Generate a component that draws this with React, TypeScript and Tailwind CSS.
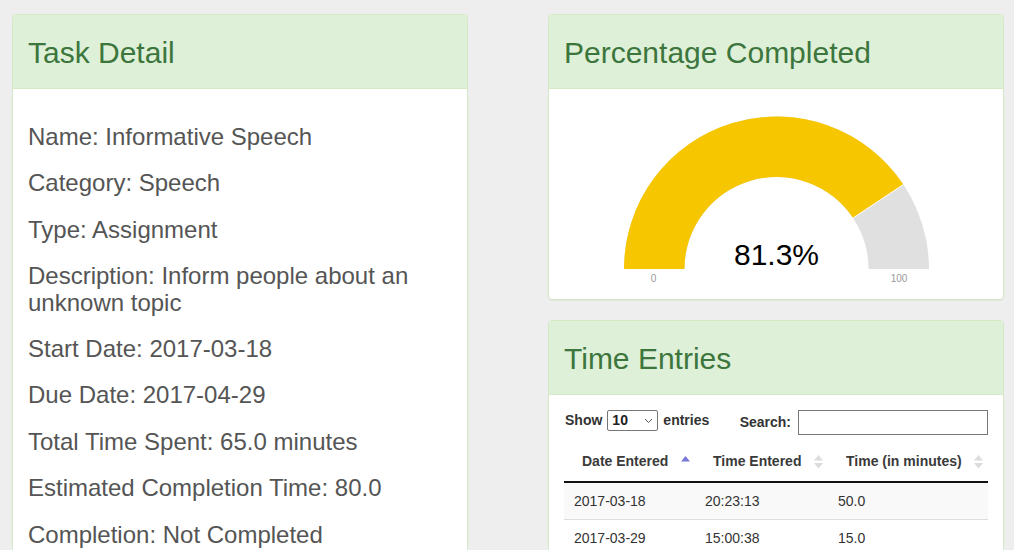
import React from "react";

const font = { fontFamily: '"Liberation Sans", Arial, Helvetica, sans-serif' };

function Panel({ title, children, className = "" }: { title: string; children: React.ReactNode; className?: string }) {
  return (
    <div className={`border border-[#d6e9c6] rounded-[4px] bg-white shadow-[0_1px_1px_rgba(0,0,0,0.05)] ${className}`}>
      <div className="bg-[#dff0d8] text-[#3c763d] border-b border-[#d6e9c6] rounded-t-[3px] px-[15px] pt-[21px] pb-[19px]">
        <h2 className="text-[30px] leading-[33px] font-normal">{title}</h2>
      </div>
      {children}
    </div>
  );
}

function SortBoth() {
  return (
    <svg width="9" height="14" viewBox="0 0 9 14" className="absolute right-[5px] top-[14px]">
      <polygon points="4.5,0 9,5.5 0,5.5" fill="#dcdcdc" />
      <polygon points="0,8 9,8 4.5,13.5" fill="#dcdcdc" />
    </svg>
  );
}

function SortAsc() {
  return (
    <svg width="9" height="6" viewBox="0 0 9 6" className="absolute right-[5px] top-[15px]">
      <polygon points="4.5,0 9,5.5 0,5.5" fill="#7878d8" />
    </svg>
  );
}

function Gauge() {
  const cx = 227.5;
  const cy = 180;
  const R = 152.5;
  const r = 92;
  const th = Math.PI * (1 - 0.813);
  const ox = cx + R * Math.cos(th);
  const oy = cy - R * Math.sin(th);
  const ix = cx + r * Math.cos(th);
  const iy = cy - r * Math.sin(th);
  const bg = `M ${cx - R} ${cy} A ${R} ${R} 0 0 1 ${cx + R} ${cy} L ${cx + r} ${cy} A ${r} ${r} 0 0 0 ${cx - r} ${cy} Z`;
  const lvl = `M ${cx - R} ${cy} A ${R} ${R} 0 0 1 ${ox} ${oy} L ${ix} ${iy} A ${r} ${r} 0 0 0 ${cx - r} ${cy} Z`;
  return (
    <svg width="454" height="210" viewBox="0 0 454 210" className="block">
      <path d={bg} fill="#e0e0e0" />
      <path d={lvl} fill="#f6c700" />
      <line x1={ix} y1={iy} x2={ox} y2={oy} stroke="#ffffff" strokeWidth="1" />
      <text x={cx} y="175.5" textAnchor="middle" fontSize="30" fill="#010101" style={font}>
        81.3%
      </text>
      <text x="104.5" y="193" textAnchor="middle" fontSize="10" fill="#999999" style={font}>
        0
      </text>
      <text x="350" y="193" textAnchor="middle" fontSize="10" fill="#999999" style={font}>
        100
      </text>
    </svg>
  );
}

export default function App() {
  const details = [
    "Name: Informative Speech",
    "Category: Speech",
    "Type: Assignment",
    "Description: Inform people about an unknown topic",
    "Start Date: 2017-03-18",
    "Due Date: 2017-04-29",
    "Total Time Spent: 65.0 minutes",
    "Estimated Completion Time: 80.0",
    "Completion: Not Completed",
  ];
  const rows = [
    ["2017-03-18", "20:23:13", "50.0"],
    ["2017-03-29", "15:00:38", "15.0"],
  ];
  return (
    <div className="w-[1014px] h-[550px] overflow-hidden bg-[#eeeeee]" style={font}>
      <div className="flex items-start pl-[12px] pt-[14px]">
        <Panel title="Task Detail" className="w-[456px] shrink-0">
          <div className="px-[15px] pt-[35px] pb-[15px] flex flex-col gap-[20px] text-[#555555]">
            {details.map((d) => (
              <h3 key={d} className="text-[24px] leading-[26.4px] font-normal">
                {d}
              </h3>
            ))}
          </div>
        </Panel>
        <div className="ml-[80px] w-[456px] shrink-0 flex flex-col gap-[20px]">
          <Panel title="Percentage Completed">
            <Gauge />
          </Panel>
          <Panel title="Time Entries">
            <div className="p-[15px] text-[14px] text-[#333333]">
              <div className="flex justify-between items-start">
                <div className="flex items-center h-[21px] font-bold">
                  <span className="ml-[1px]">Show</span>
                  <div className="ml-[5px] w-[51px] h-[21px] border border-[#767676] rounded-[2px] flex items-center justify-between pl-[4px] pr-[4px] bg-white">
                    <span className="font-bold text-[14px] text-[#222]">10</span>
                    <svg width="9" height="6" viewBox="0 0 9 6">
                      <polyline points="1,1 4.5,4.5 8,1" fill="none" stroke="#555" strokeWidth="1" />
                    </svg>
                  </div>
                  <span className="ml-[5px]">entries</span>
                </div>
                <div className="flex items-center h-[25px] font-bold">
                  <span>Search:</span>
                  <div className="ml-[7px] w-[190px] h-[25px] border border-[#767676] bg-white" />
                </div>
              </div>
              <table className="mt-[6px] w-[424px] border-collapse table-fixed">
                <colgroup>
                  <col className="w-[131px]" />
                  <col className="w-[133px]" />
                  <col className="w-[160px]" />
                </colgroup>
                <thead>
                  <tr className="border-b-2 border-[#111111]">
                    <th className="relative text-left font-bold py-[10px] pl-[18px] pr-[18px] leading-[20px] text-[#3a3a3a]">
                      Date Entered
                      <SortAsc />
                    </th>
                    <th className="relative text-left font-bold py-[10px] pl-[18px] pr-[18px] leading-[20px] text-[#3a3a3a]">
                      Time Entered
                      <SortBoth />
                    </th>
                    <th className="relative text-left font-bold py-[10px] pl-[18px] pr-[18px] leading-[20px] text-[#3a3a3a]">
                      Time (in minutes)
                      <SortBoth />
                    </th>
                  </tr>
                </thead>
                <tbody>
                  {rows.map((r, i) => (
                    <tr key={i} className={`${i % 2 === 0 ? "bg-[#f9f9f9]" : "bg-white"} ${i > 0 ? "border-t border-[#dddddd]" : ""}`}>
                      {r.map((c, j) => (
                        <td key={j} className="py-[8px] px-[10px] leading-[20px]">
                          {c}
                        </td>
                      ))}
                    </tr>
                  ))}
                </tbody>
              </table>
            </div>
          </Panel>
        </div>
      </div>
    </div>
  );
}
